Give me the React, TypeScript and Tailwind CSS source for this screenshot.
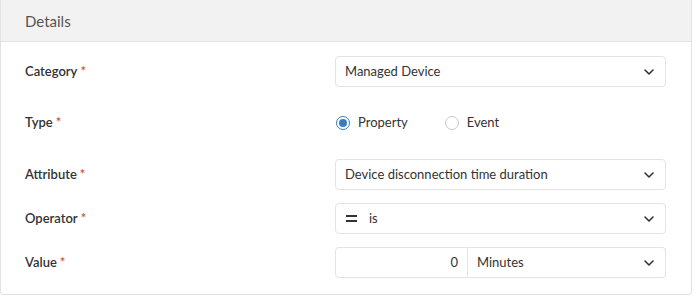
import { ChevronDown } from 'lucide-react';

function Label({ text }: { text: string }) {
  return (
    <div className="w-[310px] text-[13px] font-semibold text-[#333]">
      {text}
      <span className="ml-[3px] text-[#c8553d]">*</span>
    </div>
  );
}

function Select({ children, className = '' }: { children: React.ReactNode; className?: string }) {
  return (
    <div
      className={`flex h-[31px] items-center justify-between rounded-[4px] border border-[#e3e3e3] bg-white pl-[9px] pr-[8px] text-[13px] text-[#333] ${className}`}
    >
      <div className="flex items-center">{children}</div>
      <ChevronDown className="h-[16px] w-[16px] text-[#333]" strokeWidth={2.4} />
    </div>
  );
}

function Radio({ checked, label }: { checked?: boolean; label: string }) {
  return (
    <div className="flex items-center">
      <span
        className={`flex h-[14px] w-[14px] items-center justify-center rounded-full border ${
          checked ? 'border-[#3a7dbd] bg-white' : 'border-[#c9c9c9] bg-white'
        }`}
      >
        {checked && <span className="h-[8px] w-[8px] rounded-full bg-[#3a7dbd]" />}
      </span>
      <span className="ml-[8px] text-[13px] text-[#333]">{label}</span>
    </div>
  );
}

export default function App() {
  return (
    <div className="bg-white font-['Lato',sans-serif]">
      <div className="w-[692px] h-[295px] overflow-hidden rounded-b-[4px] border border-t-0 border-[#e2e2e2]">
        <div className="flex h-[42px] items-center border-b border-[#e2e2e2] bg-[#f2f2f2] pl-[24px] pt-[1px] text-[15px] text-[#555]">
          Details
        </div>
        <div className="pl-[24px] pr-[24px] pt-[14px]">
          <div className="flex items-center">
            <Label text="Category" />
            <Select className="w-[331px]">Managed Device</Select>
          </div>
          <div className="mt-[20px] flex h-[31px] items-center">
            <Label text="Type" />
            <div className="flex items-center pl-[1px]">
              <Radio checked label="Property" />
              <div className="ml-[37px]">
                <Radio label="Event" />
              </div>
            </div>
          </div>
          <div className="mt-[21px] flex items-center">
            <Label text="Attribute" />
            <Select className="w-[331px]">Device disconnection time duration</Select>
          </div>
          <div className="mt-[13px] flex items-center">
            <Label text="Operator" />
            <Select className="w-[331px]">
              <span className="ml-[1px] flex flex-col gap-[3px]">
                <span className="block h-[2px] w-[11px] bg-[#333]" />
                <span className="block h-[2px] w-[11px] bg-[#333]" />
              </span>
              <span className="ml-[12px]">is</span>
            </Select>
          </div>
          <div className="mt-[13px] flex items-center">
            <Label text="Value" />
            <div className="flex w-[331px]">
              <div className="flex h-[31px] w-[133px] items-center justify-end rounded-l-[4px] border border-[#e3e3e3] pr-[9px] text-[13px] text-[#333]">
                0
              </div>
              <Select className="w-[198px] rounded-l-none border-l-0">Minutes</Select>
            </div>
          </div>
        </div>
      </div>
    </div>
  );
}
